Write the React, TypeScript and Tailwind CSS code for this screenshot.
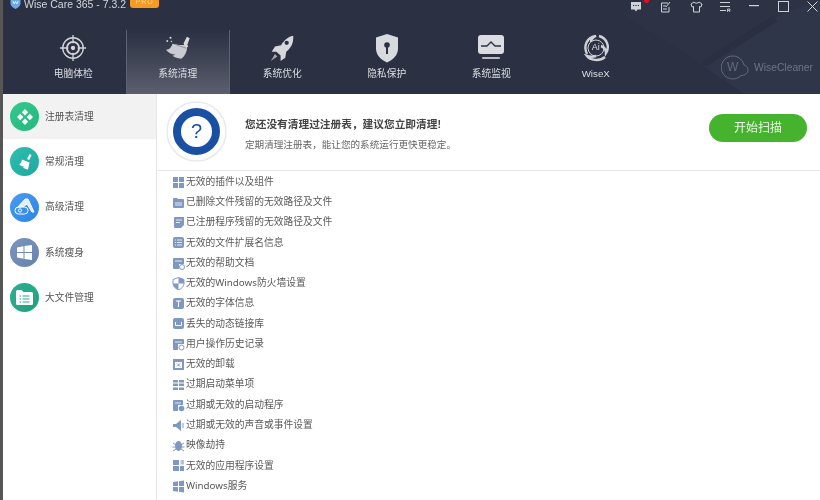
import React from "react";

const cjk = "font-['Liberation_Sans','Noto_Sans_CJK_SC',sans-serif]";
const noto = "font-['Noto_Sans','Noto_Sans_CJK_SC',sans-serif]";

const Target = () => (
  <svg width="28" height="28" viewBox="0 0 30 30" fill="none" stroke="#d4d6db" strokeWidth="1.4">
    <circle cx="15" cy="15" r="11" />
    <circle cx="15" cy="15" r="6.5" strokeWidth="2" />
    <circle cx="15" cy="15" r="1.6" fill="#d4d6db" />
    <path d="M15 1v9M15 20v9M1 15h9M20 15h9" />
  </svg>
);
const Broom = () => (
  <svg width="28" height="28" viewBox="0 0 30 30">
    <path d="M21 10l3.5-7 3 1.6L25 11.5l1 2-3.5 2.5z" fill="#d9dade" />
    <path d="M9 10.5c4 1.2 9 1.5 12.5 1.3l3.3 2.8c-.5 5-3 9.700-6.500 11.900-3.500-.3-7.300-1.500-9.300-3.100 1.300-.1 2.600-.7 3.300-1.600-2.500.3-6.800-.9-10.300-5 3.500.3 6.100-2.500 7-6.300z" fill="#c9cbd1" />
    <path d="M11 10.800l13 4.500" stroke="#8d8f96" strokeWidth="1" />
    <circle cx="7" cy="4" r="1.100" fill="#d9dade" />
    <circle cx="3.500" cy="7.500" r="1" fill="#d9dade" />
    <circle cx="8" cy="8" r=".8" fill="#d9dade" />
  </svg>
);
const Rocket = () => (
  <svg width="28" height="28" viewBox="0 0 30 30">
    <path d="M27 2c.6 7.500-2 13-7.500 17l-1 6.500-5 3.500v-6L9 19H4l3.500-5.500 6.500-1.500C18 6 21.500 3 27 2z" fill="#d6d8dc" />
    <circle cx="20" cy="9.500" r="2.300" fill="#2b3043" />
    <path d="M7.500 21.500l2.500 2.500-7 5z" fill="#a7a9b0" />
  </svg>
);
const Shield = () => (
  <svg width="26" height="30" viewBox="0 0 26 30">
    <path d="M13 1l11 3.500v11c0 6.500-4.500 11-11 14C6.500 26.500 2 22 2 15.500v-11z" fill="#d9dade" />
    <circle cx="13" cy="12" r="2.800" fill="#2b3043" />
    <rect x="12" y="13" width="2" height="8" fill="#2b3043" />
  </svg>
);
const Monitor = () => (
  <svg width="28" height="28" viewBox="0 0 28 28">
    <rect x="1" y="1" width="26" height="19" rx="3" fill="#dcdde0" />
    <path d="M4 12h6l4-4 4 4h6" fill="none" stroke="#2b3043" strokeWidth="1.300" />
    <rect x="5" y="23" width="18" height="2" rx="1" fill="#b9bbc0" />
  </svg>
);
const Swirl = () => (
  <div className="relative h-[28px] w-[28px]">
    <svg width="28" height="28" viewBox="0 0 28 28" fill="none" stroke="#cfd1d6" strokeWidth="2.400">
      <circle cx="14" cy="14" r="8" strokeWidth="1" />
      <path d="M5 20C1 12 5 3 14 2c-2 1-5 3-5 6" />
      <path d="M17 2c8 2 11 11 7 17 0-3-2-6-5-7" />
      <path d="M23 23c-6 5-15 3-18-1 3 1 6 1 9 0" />
    </svg>
    <span className="absolute inset-0 flex items-center justify-center font-['Liberation_Sans',sans-serif] text-[9px] text-[#dfe0e4]">Ai</span>
  </div>
);

const tabs = [
  { label: "电脑体检", icon: <Target /> },
  { label: "系统清理", icon: <Broom />, active: true },
  { label: "系统优化", icon: <Rocket /> },
  { label: "隐私保护", icon: <Shield /> },
  { label: "系统监视", icon: <Monitor /> },
  { label: "WiseX", icon: <Swirl /> },
];

const WinIcons = () => (
  <div className="mr-[2px] mt-[1px] flex items-start text-[#d0d3da]">
    <div className="relative h-[12px] w-[12px]">
      <svg width="12" height="12" viewBox="0 0 12 12"><path d="M1 1h10v7.500H7.500L6 10.500 4.500 8.500H1z" fill="#cfd2d8" /><path d="M3 4.500h1.200M5.400 4.500h1.200M7.800 4.500H9" stroke="#2b3043" /></svg>
      <span className="absolute -top-[3px] left-[14px] h-[5px] w-[5px] rounded-full bg-[#e01020]" />
    </div>
    <svg className="ml-[18px]" width="11" height="12" viewBox="0 0 11 12" fill="none" stroke="#cfd2d8"><path d="M8 2H1.500v9h7.500V6M3 5h3M3 8h4M6 6l4-5" /></svg>
    <svg className="ml-[19px]" width="13" height="12" viewBox="0 0 13 12" fill="none" stroke="#cfd2d8"><path d="M4 1L1 3l1 3 1.500-.5V11h6V5.500L11 6l1-3-3-2c-.5 1.500-4.500 1.500-5 0z" /></svg>
    <svg className="ml-[17px]" width="11" height="12" viewBox="0 0 11 12" fill="none" stroke="#cfd2d8"><path d="M0 1.500h10M0 5.500h10M0 9.500h6" /><path d="M7.500 8v3M7.500 8H10v1.500H7.500M9 9.500l1 1.500" strokeWidth=".8" /></svg>
    <svg className="ml-[18px] mt-[4px]" width="10" height="2"><rect width="10" height="1.200" fill="#d0d3da" /></svg>
    <svg className="ml-[19px]" width="11" height="11" viewBox="0 0 11 11" fill="none" stroke="#d0d3da"><rect x=".5" y=".5" width="10" height="10" /></svg>
    <svg className="ml-[18px]" width="11" height="11" viewBox="0 0 11 11" fill="none" stroke="#d0d3da"><path d="M.5.500l10 10M10.500.500l-10 10" /></svg>
  </div>
);

const Header = () => (
  <header className="relative h-[94px] shrink-0 overflow-hidden bg-[#2b3043] text-white">
    <svg className="absolute inset-0" width="817" height="94" viewBox="0 0 817 94">
      <polygon points="620,14 696,63 740,94 817,94 817,0 640,0" fill="#2d3245" />
      <polygon points="700,66 775,16 817,0 817,94 742,94" fill="#30364a" />
      <polygon points="698,62 770,16 775,21 704,66" fill="#2a2f41" />
    </svg>
    <div className="relative flex h-[30px] items-start justify-between pl-[4px]">
      <div className="flex items-start">
        <svg className="-mt-[3px] ml-[3px]" width="11" height="12" viewBox="0 0 11 12"><path d="M5.500 0l5 1.500v5C10.500 9 8 11 5.500 12 3 11 .5 9 .5 6.500v-5z" fill="#6fa8e8" /><path d="M3 4l1.200 3L5.500 4.500 6.800 7 8 4" stroke="#fff" fill="none" strokeWidth=".8" /></svg>
        <span className="-mt-[3px] ml-[3px] font-['Liberation_Sans',sans-serif] text-[10.500px] leading-[14px] text-[#d3d5da]">Wise Care 365 - 7.3.2</span>
        <span className="-mt-[3px] ml-[4px] flex h-[11px] w-[29px] items-center justify-center rounded-[3px] bg-[#f59a22] font-['Liberation_Sans',sans-serif] text-[7px] tracking-[1px] text-[#fbdcae]">PRO</span>
      </div>
      <WinIcons />
    </div>
    <nav className="relative flex h-[64px] pl-[18px]">
      {tabs.map((t) => (
        <div
          key={t.label}
          className={
            "flex h-full w-[104.500px] flex-col items-center pt-[3px] " +
            (t.active ? "border-x border-[#5e6372] bg-gradient-to-b from-[#2b3043] to-[#5b5f6d]" : "")
          }
        >
          <div className="flex h-[30px] items-center justify-center">{t.icon}</div>
          <span className={`${cjk} mt-[4px] text-[9.750px] leading-[14px] text-[#dcdee2]`}>{t.label}</span>
        </div>
      ))}
      <div className="ml-auto mr-[7px] mt-[24px] flex h-[28px] items-center gap-[5px] text-[#6e7382]">
        <div className="relative h-[26px] w-[28px]">
          <svg width="28" height="26" viewBox="0 0 28 26" fill="none" stroke="#646978"><path d="M20 20.500A11.500 11.500 0 1 1 23 10c2.500.5 4 2.500 4 5 0 3-2.500 5.500-7 5.500z" /></svg>
          <span className="absolute left-[6px] top-[3px] font-['Liberation_Sans',sans-serif] text-[12px] text-[#646978]">W</span>
        </div>
        <span className="font-['Liberation_Sans',sans-serif] text-[10.300px]">WiseCleaner</span>
      </div>
    </nav>
  </header>
);

const SideIcon = ({ from, to, children }: { from: string; to: string; children: React.ReactNode }) => (
  <div className={`flex h-[29px] w-[29px] shrink-0 items-center justify-center rounded-full bg-gradient-to-br ${from} ${to}`}>{children}</div>
);

const side = [
  {
    label: "注册表清理", active: true, from: "from-[#35c98c]", to: "to-[#23b77f]",
    icon: <svg width="18" height="18" viewBox="0 0 18 18" fill="#fff"><path d="M9 1l3.200 3.200L9 7.400 5.800 4.200zM9 10.600l3.200 3.200L9 17l-3.200-3.200zM4.200 5.800L7.400 9l-3.200 3.200L1 9zM13.800 5.800L17 9l-3.200 3.200L10.600 9z" /></svg>,
  },
  {
    label: "常规清理", from: "from-[#2fbfb0]", to: "to-[#1ea79f]",
    icon: <svg width="18" height="18" viewBox="0 0 18 18" fill="#fff"><path d="M11 6l2.500-5 2 1-2.300 5zM6 6.500l7.500 3-1.500 7c-2-.3-3.500-1-5-2 .7-.2 1-.5 1.300-1-1.500.2-3.500-.5-5.300-2.500 1.500 0 2.500-2 3-4.500z" /></svg>,
  },
  {
    label: "高级清理", from: "from-[#4a9cf0]", to: "to-[#2d83e6]",
    icon: <svg width="22" height="18" viewBox="0 0 22 18" fill="none" stroke="#fff"><path d="M3 10L11 1l3 0 6 13h-2L13 6 9 9" fill="#fff" fillOpacity=".85" /><rect x="1" y="9" width="13" height="7" rx="3.500" /><circle cx="6" cy="12.500" r="1.600" /></svg>,
  },
  {
    label: "系统瘦身", from: "from-[#7c95bd]", to: "to-[#6682ad]",
    icon: <svg width="15" height="15" viewBox="0 0 15 15" fill="#fff"><path d="M0 2.500l6.500-1.200v5.700H0zM7.500 1.100L15 0v7H7.500zM0 8h6.500v5.700L0 12.500zM7.500 8H15v7l-7.500-1.100z" /></svg>,
  },
  {
    label: "大文件管理", from: "from-[#2cb092]", to: "to-[#1fa07f]",
    icon: <svg width="17" height="15" viewBox="0 0 17 15"><path d="M0 1.500A1.500 1.500 0 0 1 1.500 0h4L7.500 2h8A1.500 1.500 0 0 1 17 3.500v10a1.500 1.500 0 0 1-1.500 1.500h-14A1.500 1.500 0 0 1 0 13.500z" fill="#fff" /><path d="M3.500 6h1.500M6.500 6h7M3.500 9h1.500M6.500 9h7M3.500 12h1.500M6.500 12h7" stroke="#27a98b" strokeWidth="1.200" /></svg>,
  },
];

const Sidebar = () => (
  <aside className="w-[153px] shrink-0 bg-white">
    {side.map((s) => (
      <div key={s.label} className={`flex h-[45.300px] items-center gap-[6px] pl-[7px] ${s.active ? "bg-[#f2f2f2]" : ""}`}>
        <SideIcon from={s.from} to={s.to}>{s.icon}</SideIcon>
        <span className={`${cjk} mt-[1px] text-[9.750px] text-[#555]`}>{s.label}</span>
      </div>
    ))}
  </aside>
);

const c = "#7f98c2";
const L = ({ children }: { children: React.ReactNode }) => (
  <svg width="13" height="13" viewBox="0 0 13 13">{children}</svg>
);
const box = <rect x="1" y="1" width="11" height="11" rx="2" fill={c} />;
const listItems: { t: string; i: React.ReactNode }[] = [
  { t: "无效的插件以及组件", i: <L><path d="M1 1h5v5H1zM7 1h5v5H7zM1 7h5v5H1zM7 7h5v5H7z" fill={c} /></L> },
  { t: "已删除文件残留的无效路径及文件", i: <L><path d="M1 3a1 1 0 0 1 1-1h3l1 1h5a1 1 0 0 1 1 1v7a1 1 0 0 1-1 1H2a1 1 0 0 1-1-1z" fill={c} /><path d="M3 7h7M3 9h7" stroke="#fff" strokeWidth=".8" /></L> },
  { t: "已注册程序残留的无效路径及文件", i: <L><path d="M3 1h9v8l-3 3H3a1 1 0 0 1-1-1V2a1 1 0 0 1 1-1z" fill={c} /><path d="M4 4h6M4 6.500h4" stroke="#fff" strokeWidth=".8" /></L> },
  { t: "无效的文件扩展名信息", i: <L>{box}<path d="M3 4h1M5 4h5M3 6.500h1M5 6.500h5M3 9h1M5 9h5" stroke="#fff" strokeWidth=".8" /></L> },
  { t: "无效的帮助文档", i: <L><path d="M1 2a1 1 0 0 1 1-1h9a1 1 0 0 1 1 1v5H7v5H2a1 1 0 0 1-1-1z" fill={c} /><path d="M3 4h7" stroke="#fff" strokeWidth=".8" /><circle cx="10" cy="10" r="2.500" fill="none" stroke={c} /></L> },
  { t: "无效的Windows防火墙设置", i: <L><path d="M6.500 .5l5.500 2v4c0 3-2.500 5-5.500 6.500C3.500 11.500 1 9.500 1 6.500v-4z" fill="none" stroke={c} /><path d="M6.500 .5l5.500 2v4H6.500zM6.500 6.500H1c0 3 2.500 5 5.500 6.500z" fill={c} /></L> },
  { t: "无效的字体信息", i: <L>{box}<path d="M4 4h5M6.500 4v6" stroke="#fff" strokeWidth="1" /></L> },
  { t: "丢失的动态链接库", i: <L>{box}<path d="M3.500 5v3.500h6V5" fill="none" stroke="#fff" strokeWidth="1" /></L> },
  { t: "用户操作历史记录", i: <L><path d="M1 2a1 1 0 0 1 1-1h9a1 1 0 0 1 1 1v4H6v6H2a1 1 0 0 1-1-1z" fill={c} /><path d="M3 4h7" stroke="#fff" strokeWidth=".8" /><circle cx="9.500" cy="9.500" r="2.500" fill="none" stroke={c} /></L> },
  { t: "无效的卸载", i: <L><rect x="1" y="1" width="11" height="11" fill={c} /><rect x="3" y="4" width="7" height="6" fill="#fff" /><path d="M5 5.500l3 3M8 5.500l-3 3" stroke={c} /></L> },
  { t: "过期启动菜单项", i: <L><path d="M1 2h5v2.500H1zM7 2h5v2.500H7zM1 5.500h5V8H1zM7 5.500h5V8H7zM1 9.500h5V12H1zM7 9.500h5V12H7z" fill={c} /></L> },
  { t: "过期或无效的启动程序", i: <L><path d="M1 2a1 1 0 0 1 1-1h8a1 1 0 0 1 1 1v4H6v6H2a1 1 0 0 1-1-1z" fill={c} /><path d="M3 4h6" stroke="#fff" strokeWidth=".8" /><circle cx="9.500" cy="9.500" r="2.800" fill={c} /></L> },
  { t: "过期或无效的声音或事件设置", i: <L><path d="M1 5h3l5-4v11L4 8H1z" fill={c} /><path d="M11 4v5" stroke={c} /></L> },
  { t: "映像劫持", i: <L><ellipse cx="6.500" cy="7" rx="3.500" ry="5" fill={c} /><path d="M1 4l3 2M12 4L9 6M.5 8h3M12.500 8h-3M1 12l3-2M12 12l-3-2" stroke={c} /></L> },
  { t: "无效的应用程序设置", i: <L><path d="M1 1h6v5H1zM1 7h6v5H1zM8 7h4v5H8z" fill={c} /><path d="M8.500 1h3.500v4.500H8.500z" fill="#b5c4dc" /></L> },
  { t: "Windows服务", i: <L><path d="M1 2l5-.7V6H1zM7 1.200L12 .5V6H7zM1 7h5v4.700L1 11zM7 7h5v5.500l-5-.7z" fill={c} /></L> },
];

const Banner = () => (
  <div className="flex h-[77px] shrink-0 items-center border-b border-[#e6e6e6] pl-[9px] pr-[13px]">
    <div className="relative mb-[2px] h-[61px] w-[61px] shrink-0">
      <svg width="61" height="61" viewBox="0 0 61 61" fill="none">
        <circle cx="30.500" cy="30.500" r="29.500" stroke="#e9eaec" strokeWidth="1.500" />
        <circle cx="30.500" cy="30.500" r="19.500" stroke="#1a50a3" strokeWidth="8" />
      </svg>
      <span className="absolute inset-0 flex items-center justify-center font-['Liberation_Sans',sans-serif] text-[20px] text-[#1a50a3]">?</span>
    </div>
    <div className={`${cjk} ml-[18px] mt-[4px] flex-1`}>
      <div className="text-[10.700px] font-bold leading-[16px] text-[#444]">您还没有清理过注册表，建议您立即清理!</div>
      <div className="mt-[6px] text-[9.600px] leading-[14px] text-[#666]">定期清理注册表，能让您的系统运行更快更稳定。</div>
    </div>
    <button className={`${cjk} mb-[9px] h-[28px] w-[98px] rounded-full bg-[#46b32f] text-[12px] text-[#eaf7e4]`}>开始扫描</button>
  </div>
);

export default function App() {
  return (
    <div className="flex h-[500px] w-[820px] overflow-hidden bg-white blur-[0.3px]">
      <div className="w-[3px] shrink-0 bg-[#565656]" />
      <div className="flex min-w-0 flex-1 flex-col">
        <Header />
        <div className="flex min-h-0 flex-1">
          <Sidebar />
          <main className="flex min-w-0 flex-1 flex-col border-l border-[#e6e6e6]">
            <Banner />
            <ul className="overflow-hidden pl-[15px] pt-[1px]">
              {listItems.map((it) => (
                <li key={it.t} className="flex h-[20.270px] items-center gap-[1px]">
                  {it.i}
                  <span className={`${noto} text-[9.750px] text-[#5a5a5a]`}>{it.t}</span>
                </li>
              ))}
              <li className="flex h-[20.270px] items-center">
                <L><path d="M5 0h3l1 3H4z" fill={c} /></L>
              </li>
            </ul>
          </main>
        </div>
      </div>
    </div>
  );
}
